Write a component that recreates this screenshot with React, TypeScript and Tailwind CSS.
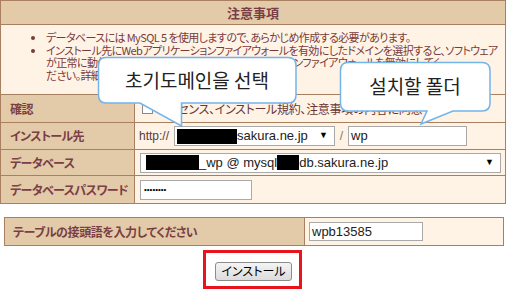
import React from 'react';

const jp = "font-['Noto_Sans_CJK_JP',sans-serif] [font-feature-settings:'palt']";
const latin = "font-['Liberation_Sans','Noto_Sans_CJK_JP',sans-serif]";
const kr = "font-['Noto_Sans_CJK_KR',sans-serif]";

const labelCls = `w-[134px] shrink-0 bg-[#e3cbaa] border-r border-[#a8805f] pl-[9px] flex items-center whitespace-nowrap text-[12px] tracking-[-0.6px] font-bold text-[#7a3e45] ${jp}`;
const valueCls = 'flex-1 bg-[#fef3e5] flex items-center';

function FakeSelect({ className, children }: { className: string; children: React.ReactNode }) {
  return (
    <div className={`bg-white border border-[#a9a9a9] flex items-center pl-[2px] pr-[6px] text-[13px] text-[#222] ${latin} ${className}`}>
      <div className="flex-1 flex items-center whitespace-nowrap overflow-hidden">{children}</div>
      <span className="text-[9px] text-black">▼</span>
    </div>
  );
}

function Redact({ w }: { w: string }) {
  return <span className={`inline-block h-[15px] bg-black ${w}`} />;
}

export default function App() {
  return (
    <div className="relative w-[507px] h-[297px] bg-white overflow-hidden">
      {/* main form table */}
      <div className="w-[506px] border border-[#a8805f]">
        <div className={`h-[24px] bg-[#e3cbaa] border-b border-[#a8805f] flex items-center justify-center text-[13px] font-bold text-[#7a3e45] ${jp}`}>
          注意事項
        </div>
        <div className={`h-[70px] bg-[#fef3e5] border-b border-[#a8805f] pt-[6px] text-[11px] tracking-[-0.6px] leading-[12.5px] text-[#7a3a3a] overflow-hidden ${jp}`}>
          <ul className="list-disc pl-[45px] marker:text-[10px]">
            <li className="whitespace-nowrap">データベースには MySQL 5 を使用しますので、あらかじめ作成する必要があります。</li>
            <li className="whitespace-nowrap">
              インストール先にWebアプリケーションファイアウォールを有効にしたドメインを選択すると、ソフトウェア
              <br />
              が正常に動作しない場合がありますので、アプリケーションファイアウォールを無効にしてく
              <br />
              ださい。詳細はこちらをご覧ください。
            </li>
          </ul>
        </div>
        <div className="h-[28px] flex border-b border-[#a8805f]">
          <div className={labelCls}>確認</div>
          <div className={`${valueCls} pl-[7px] gap-[4px] text-[12px] tracking-[-0.3px] text-[#6b3535] ${jp}`}>
            <span className="inline-block w-[11px] h-[11px] border border-[#8a8a8a] bg-white" />
            <span>ライセンス、インストール規約、注意事項の内容に同意する</span>
          </div>
        </div>
        <div className="h-[27px] flex border-b border-[#a8805f]">
          <div className={labelCls}>インストール先</div>
          <div className={`${valueCls} pl-[4px] text-[12px] text-[#5a3a3a] ${latin}`}>
            <span className="w-[35px]">http://</span>
            <FakeSelect className="w-[161px] h-[20px]">
              <Redact w="w-[60px]" />
              <span>sakura.ne.jp</span>
            </FakeSelect>
            <span className="w-[13px] text-center text-[#777]">/</span>
            <div className={`w-[119px] h-[20px] bg-white border border-[#a9a9a9] pl-[2px] flex items-center text-[13px] text-[#222] ${latin}`}>wp</div>
          </div>
        </div>
        <div className="h-[26px] flex border-b border-[#a8805f]">
          <div className={labelCls}>データベース</div>
          <div className={`${valueCls} pl-[5px]`}>
            <FakeSelect className="w-[361px] h-[20px] pl-[5px]">
              <Redact w="w-[53px]" />
              <span>_wp @ mysql</span>
              <Redact w="w-[22px]" />
              <span>db.sakura.ne.jp</span>
            </FakeSelect>
          </div>
        </div>
        <div className="h-[27px] flex">
          <div className={labelCls}>データベースパスワード</div>
          <div className={`${valueCls} pl-[5px]`}>
            <div className="w-[112px] h-[20px] bg-white border border-[#a9a9a9] pl-[3px] flex items-center text-[8px] text-black font-['Liberation_Sans',sans-serif]">
              ••••••••
            </div>
          </div>
        </div>
      </div>

      {/* prefix table */}
      <div className="mt-[13px] ml-[4px] w-[500px] h-[29px] border border-[#a8805f] flex">
        <div className={`w-[300px] shrink-0 bg-[#e3cbaa] border-r border-[#a8805f] pl-[8px] flex items-center text-[12px] tracking-[-0.4px] font-bold text-[#7a3e45] ${jp}`}>
          テーブルの接頭語を入力してください
        </div>
        <div className="flex-1 bg-[#fef3e5] flex items-center pl-[4px]">
          <div className={`w-[114px] h-[19px] bg-white border border-[#a9a9a9] pl-[2px] flex items-center text-[13px] text-[#222] ${latin}`}>wpb13585</div>
        </div>
      </div>

      {/* install button with red highlight */}
      <div className="flex justify-center mt-[4px] pr-[2px]">
        <div className="border-[3px] border-[#e8141b] pt-[5px] pb-[4px] pl-[9px] pr-[7px]">
          <button className={`w-[77px] h-[19px] rounded-[3px] border border-[#8c8c8c] bg-gradient-to-b from-[#f4f4f4] to-[#dcdcdc] text-[12px] text-black leading-none ${jp}`}>
            インストール
          </button>
        </div>
      </div>

      {/* callouts */}
      <svg className="absolute left-0 top-0 pointer-events-none" width="507" height="297">
        <path
          d="M106,57.5 H288 Q296,57.5 296,65.5 V95 Q296,103 288,103 H181.5 V126 L140,103 H106 Q98.5,103 98.5,95 V65.5 Q98.5,57.5 106,57.5 Z"
          fill="#fff"
          stroke="#73b4ea"
          strokeWidth="1.5"
        />
        <path
          d="M348,62.5 H482 Q490,62.5 490,70.5 V103 Q490,111 482,111 H453 L421,124 L427,111 H348 Q340.5,111 340.5,103 V70.5 Q340.5,62.5 348,62.5 Z"
          fill="#fff"
          stroke="#73b4ea"
          strokeWidth="1.5"
        />
      </svg>
      <div className={`absolute left-[98px] top-[57px] w-[198px] h-[46px] flex items-center justify-center text-[19px] text-[#222] ${kr}`}>
        초기도메인을 선택
      </div>
      <div className={`absolute left-[340px] top-[62px] w-[150px] h-[49px] flex items-center justify-center text-[19px] text-[#222] ${kr}`}>
        설치할 폴더
      </div>
    </div>
  );
}
